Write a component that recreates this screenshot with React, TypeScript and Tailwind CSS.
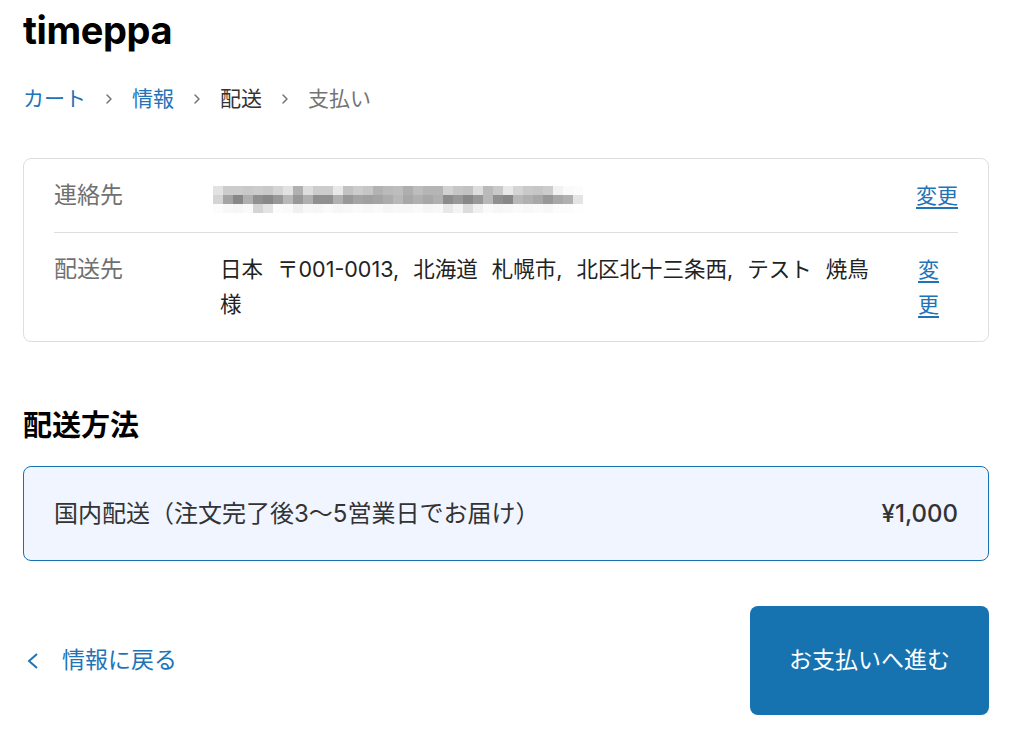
import { ChevronRight } from "lucide-react";

const font = "font-['Inter','Noto_Sans_CJK_JP',sans-serif]";

// pixelated e-mail (blurred in the original)
const mosaic = [
  "e2 cc cc c9 cc c9 d4 e2 b0 dd cc cc e8 c2 cc c6 b2 ba bd ae bd b5 b5 d2 c6 c2 dd ba c9 e8 d4 c9 c6 cc f2 fa fc",
  "d4 a4 88 b0 90 88 98 b8 98 b0 90 90 b0 98 a4 a0 a4 ac b8 a8 b0 a8 b0 8c 98 88 98 b8 90 88 b8 b0 a8 98 a8 b0 e4",
  "fc f8 f6 fa d4 e4 fc fa f0 f8 f6 fa f6 f8 fa f8 fa f6 f8 f8 fa f6 f8 e8 f4 dc f0 fa f6 f8 fa f8 fa f8 fc fc fe",
].map((r) => r.split(" "));

export default function App() {
  return (
    <div className={`min-h-screen bg-white pl-[23px] pr-[35px] text-[#333] ${font}`}>
      <h1 className="pt-[8px] text-[38px] font-bold leading-[44px] tracking-[-0.01em] text-black">
        timeppa
      </h1>

      {/* Breadcrumb */}
      <nav className="mt-[32px] flex items-center gap-[15px] text-[21px] leading-[30px]">
        <a className="text-[#1f73b7]">カート</a>
        <ChevronRight size={16} strokeWidth={2.2} className="text-[#737373]" />
        <a className="text-[#1f73b7]">情報</a>
        <ChevronRight size={16} strokeWidth={2.2} className="text-[#737373]" />
        <span className="text-[#333]">配送</span>
        <ChevronRight size={16} strokeWidth={2.2} className="text-[#737373]" />
        <span className="text-[#737373]">支払い</span>
      </nav>

      {/* Review */}
      <div className="mt-[44px] rounded-[8px] border border-[#dedede] px-[30px]">
        <div className="flex items-start py-[19px] leading-[35px]">
          <div className="w-[166px] shrink-0 text-[23px] text-[#707070]">連絡先</div>
          <div className="flex-1">
            <svg width="370" height="27" viewBox="0 0 370 27" className="-ml-[7px] mt-[8px] block">
              {mosaic.map((row, y) =>
                row.map((c, x) => (
                  <rect key={`${y}-${x}`} x={x * 10} y={y * 9} width="10" height="9" fill={`#${c}${c}${c}`} />
                ))
              )}
            </svg>
          </div>
          <a className="shrink-0 whitespace-nowrap text-[21px] text-[#1f73b7] underline underline-offset-[4px]">
            変更
          </a>
        </div>
        <div className="border-t border-[#dedede]" />
        <div className="flex items-start py-[19px] leading-[35px]">
          <div className="w-[166px] shrink-0 text-[23px] text-[#707070]">配送先</div>
          <div className="flex-1 pr-[20px] text-[21.5px] text-[#222] [word-spacing:8px]">
            日本 〒001-0013, 北海道 札幌市, 北区北十三条西, テスト 焼鳥
            <br />様
          </div>
          <a className="w-[40px] shrink-0 pr-[20px] text-[21px] text-[#1f73b7] underline underline-offset-[4px]">
            変更
          </a>
        </div>
      </div>

      {/* Shipping method */}
      <h2 className="mt-[64px] text-[29px] font-bold leading-[40px] text-black">配送方法</h2>
      <div className="mt-[20px] flex h-[95px] items-center justify-between rounded-[8px] border border-[#1773b0] bg-[#f0f5ff] px-[30px]">
        <span className="text-[24px] text-[#333]">国内配送（注文完了後3〜5営業日でお届け）</span>
        <span className="text-[24px] font-medium text-[#333]">¥1,000</span>
      </div>

      {/* Footer */}
      <div className="mt-[45px] flex items-center justify-between">
        <a className="flex items-center gap-[24px] pl-[4px] text-[23px] text-[#1f73b7]">
          <svg width="11" height="16" viewBox="0 0 11 16" fill="none" stroke="currentColor" strokeWidth="2">
            <polyline points="10,1 2,8 10,15" />
          </svg>
          情報に戻る
        </a>
        <button className="h-[109px] w-[239px] rounded-[8px] bg-[#1773b0] text-[23px] text-white">
          お支払いへ進む
        </button>
      </div>
    </div>
  );
}
